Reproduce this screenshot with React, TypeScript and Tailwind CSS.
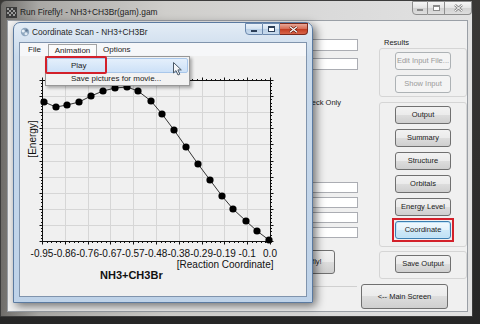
import React from 'react'

const labels = ['-0.95', '-0.86', '-0.76', '-0.67', '-0.57', '-0.48', '-0.38', '-0.29', '-0.19', '-0.1', '0.0']

const points: [number, number][] = [
  [44, 102], [56, 107], [67, 105], [79, 102], [91, 96], [103, 91], [115, 88], [127, 87], [138, 91], [151, 101],
  [162, 114], [174, 130], [186, 147], [198, 164], [210, 180], [222, 196], [233, 209], [246, 221], [257, 231], [269, 240],
]

function Chart() {
  const L = 42
  const R = 270
  const T = 80
  const B = 241
  const dx = (R - L) / 10
  const dy = (B - T) / 10
  const px = (v: number) => Math.round(v) + 0.5
  const steps = Array.from({ length: 51 }, (_, k) => k)

  return (
    <svg width={286} height={240} viewBox="20 56 286 240" className="block">
      {/* grid */}
      {Array.from({ length: 9 }, (_, i) => (
        <line key={'gv' + i} x1={px(L + dx * (i + 1))} x2={px(L + dx * (i + 1))} y1={T} y2={B} stroke="#d6d6d6" />
      ))}
      {Array.from({ length: 9 }, (_, i) => (
        <line key={'gh' + i} x1={L} x2={R} y1={px(T + dy * (i + 1))} y2={px(T + dy * (i + 1))} stroke="#d6d6d6" />
      ))}

      {/* ticks */}
      <g stroke="#111" strokeWidth={1}>
        {steps.map((k) => {
          const len = k % 5 === 0 ? 3 : 1.5
          const x = px(L + (dx * k) / 5)
          const y = px(T + (dy * k) / 5)
          return (
            <g key={'t' + k}>
              <line x1={x} x2={x} y1={B + 0.5} y2={B + 0.5 + len} />
              <line x1={x} x2={x} y1={T + 0.5} y2={T + 0.5 - len} />
              <line x1={L + 0.5} x2={L + 0.5 - len} y1={y} y2={y} />
              <line x1={R + 0.5} x2={R + 0.5 + len} y1={y} y2={y} />
            </g>
          )
        })}
      </g>
      <rect x={L + 0.5} y={T + 0.5} width={R - L} height={B - T} fill="none" stroke="#111" />

      {/* data */}
      <polyline points={points.map((p) => p.join(',')).join(' ')} fill="none" stroke="#333" strokeWidth={1} />
      {points.map(([x, y], i) => (
        <circle key={'p' + i} cx={x} cy={y} r={3.6} fill="#000" />
      ))}

      {/* labels */}
      <g fontFamily="'Liberation Sans', Arial, sans-serif" fill="#111">
        {labels.map((t, i) => (
          <text key={'l' + i} x={L + dx * i} y={256.5} fontSize={10} textAnchor="middle">
            {t}
          </text>
        ))}
        <text x={273.5} y={268} fontSize={10} textAnchor="end">
          [Reaction Coordinate]
        </text>
        <text x={100} y={278.5} fontSize={11} fontWeight="bold">
          NH3+CH3Br
        </text>
        <text transform="rotate(-90)" x={-139} y={35.5} fontSize={10} textAnchor="middle">
          [Energy]
        </text>
      </g>
    </svg>
  )
}

function WinButton({ label, variant = 'normal', className = '' }: { label: string; variant?: 'normal' | 'disabled' | 'default'; className?: string }) {
  const styles = {
    normal: 'border-[#707070] bg-[linear-gradient(#f2f2f2_0%,#ebebeb_49%,#dddddd_50%,#cfcfcf_100%)] text-[#1b1b1b]',
    disabled: 'border-[#adb2b5] bg-[#f4f4f4] text-[#9a9a9a]',
    default: 'border-[#3c7fb1] bg-[linear-gradient(#f1f9fe_0%,#e3f2fb_49%,#cfe9f8_50%,#bfe1f5_100%)] text-[#1b1b1b] shadow-[inset_0_0_0_1px_#c5e4f8]',
  }[variant]
  return (
    <div className={`flex items-center justify-center rounded-[3px] border text-[7.5px] leading-none ${styles} ${className}`}>
      {label}
    </div>
  )
}

function MainWindow() {
  return (
    <div className="flex h-[317px] w-[473px] flex-col rounded-t-[6px] border border-[#3c3c3c] bg-[linear-gradient(90deg,#6e6c69_0%,#a9a8a5_8%,#cfcecb_35%,#dadada_70%,#e2e2e2_100%)]">
      {/* title bar */}
      <div className="flex h-[19px] items-start pl-[5px]">
        <svg width="11" height="11" viewBox="0 0 11 11" className="mt-[6px]">
          <rect width="11" height="11" fill="#3b3b3b" />
          <path d="M1 1h2v2H1zM5 1h2v2H5zM3 3h2v2H3zM7 3h2v2H7zM1 5h2v2H1zM5 5h2v2H5zM9 5h1v2H9zM3 7h2v2H3zM7 7h2v2H7z" fill="#9a9a9a" />
        </svg>
        <span className="ml-[3px] mt-[6px] text-[8.4px] leading-[10px] text-[#222]">Run Firefly! - NH3+CH3Br(gam).gam</span>
        <div className="ml-auto flex h-[14px]">
          <div className="flex w-[16px] items-center justify-center rounded-bl-[4px] border border-[#8e8e8e] bg-[linear-gradient(#f6f6f6,#e4e4e4_50%,#d2d2d2_51%,#dedede)]">
            <div className="mt-[3px] h-[2px] w-[6px] border border-[#8a8a8a] bg-white" />
          </div>
          <div className="flex w-[17px] items-center justify-center border-y border-r border-[#8e8e8e] bg-[linear-gradient(#f6f6f6,#e4e4e4_50%,#d2d2d2_51%,#dedede)]">
            <div className="h-[6px] w-[7px] border border-[#8a8a8a] border-t-2 bg-white" />
          </div>
          <div className="flex w-[27px] items-center justify-center rounded-br-[4px] border-y border-r border-[#8e8e8e] bg-[linear-gradient(#f6f6f6,#e4e4e4_50%,#d2d2d2_51%,#dedede)]">
            <svg width="9" height="8" viewBox="0 0 9 8">
              <path d="M1 1l7 6M8 1L1 7" stroke="#8a8a8a" strokeWidth="2.6" />
              <path d="M1 1l7 6M8 1L1 7" stroke="#fff" strokeWidth="1" />
            </svg>
          </div>
        </div>
      </div>

      {/* client */}
      <div className="flex flex-1 flex-col pl-[6px] pr-[4px] pb-[4px]">
        <div className="flex flex-1 flex-col border border-[#9a9fa6] bg-[#f0f0f0] text-[7.5px] leading-none text-[#1b1b1b]">
          <div className="flex">
            {/* left pane */}
            <div className="flex flex-1 flex-col items-end pr-[21px]">
              <div className="mt-[18px] h-[12px] w-[100px] border border-[#abadb3] bg-white" />
              <div className="mt-[7px] h-[12px] w-[100px] border border-[#abadb3] bg-white" />
              <div className="mr-[17px] mt-[28px] flex h-[10px] items-center gap-[3px]">
                <span className="h-[9px] w-[9px] border border-[#8f8f8f] bg-white" />
                <span>Check Only</span>
              </div>
              <div className="mt-[74px] flex flex-col gap-[4px]">
                <div className="h-[11px] w-[100px] border border-[#abadb3] bg-white" />
                <div className="h-[11px] w-[100px] border border-[#abadb3] bg-white" />
                <div className="h-[11px] w-[100px] border border-[#abadb3] bg-white" />
                <div className="h-[11px] w-[100px] border border-[#abadb3] bg-white" />
              </div>
              <WinButton label="Run Firefly!" className="mr-[23px] mt-[12px] h-[24px] w-[65px]" />
            </div>

            {/* right pane */}
            <div className="flex w-[88px] flex-col">
              <div className="ml-[5px] mt-[18px] h-[9px]">Results</div>
              <div className="flex h-[49px] flex-col items-center gap-[5px] rounded-[3px] border border-[#d5d5d5] pt-[3px]">
                <WinButton label="Edit Input File..." variant="disabled" className="h-[18px] w-[56px]" />
                <WinButton label="Show Input" variant="disabled" className="h-[18px] w-[56px]" />
              </div>
              <div className="mt-[5px] flex h-[145px] flex-col items-center gap-[5px] rounded-[3px] border border-[#d5d5d5] pt-[3px]">
                <WinButton label="Output" className="h-[18px] w-[56px]" />
                <WinButton label="Summary" className="h-[18px] w-[56px]" />
                <WinButton label="Structure" className="h-[18px] w-[56px]" />
                <WinButton label="Orbitals" className="h-[18px] w-[56px]" />
                <WinButton label="Energy Level" className="h-[18px] w-[56px]" />
                <div className="-my-[3px] border-2 border-[#d3202a] p-[1px]">
                  <WinButton label="Coordinate" variant="default" className="h-[18px] w-[56px]" />
                </div>
              </div>
              <div className="mt-[4px] flex h-[28px] flex-col items-center rounded-[3px] border border-[#d5d5d5] pt-[3px]">
                <WinButton label="Save Output" className="h-[18px] w-[56px]" />
              </div>
            </div>
          </div>

          {/* bottom row */}
          <div className="mt-[5px] flex items-start justify-end pr-[19px]">
            <div className="mr-[4px] mt-[2px] h-0 w-[60px] border-t border-[#d0d0d0]" />
            <WinButton label="<-- Main Screen" className="h-[25px] w-[87px]" />
          </div>
        </div>
      </div>
    </div>
  )
}

function CoordinateDialog() {
  return (
    <div className="absolute left-[13px] top-[22px] flex h-[281px] w-[300px] flex-col rounded-t-[7px] border border-[#5b7aa0] bg-[linear-gradient(180deg,#e3ecf5_0%,#c9daec_12%,#bed2e8_100%)] shadow-[3px_3px_10px_rgba(0,0,0,0.55)]">
      {/* title bar */}
      <div className="flex h-[19px] items-start pl-[6px]">
        <svg width="10" height="10" viewBox="0 0 10 10" className="mt-[4px]">
          <circle cx="5" cy="5" r="4.2" fill="#8fa7bf" />
          <circle cx="3.2" cy="4" r="1.6" fill="#e8f0f7" />
          <circle cx="6.6" cy="3.4" r="1.2" fill="#5d7690" />
          <circle cx="6" cy="6.8" r="1.5" fill="#dfe9f2" />
        </svg>
        <span className="ml-[2px] mt-[4px] text-[8.3px] leading-[10px] text-[#1e1e1e]">Coordinate Scan - NH3+CH3Br</span>
        <div className="ml-auto mr-[4px] flex h-[12px]">
          <div className="flex w-[18px] items-center justify-center rounded-bl-[4px] border border-[#6b88ad] bg-[linear-gradient(#e9f1f9,#d3e2f1_50%,#b9cfe6_51%,#c9dbee)]">
            <div className="mt-[3px] h-[2px] w-[6px] border border-[#2c3e57] bg-white" />
          </div>
          <div className="flex w-[17px] items-center justify-center border-y border-r border-[#6b88ad] bg-[linear-gradient(#e9f1f9,#d3e2f1_50%,#b9cfe6_51%,#c9dbee)]">
            <div className="h-[6px] w-[7px] border border-[#2c3e57] border-t-2 bg-white" />
          </div>
          <div className="flex w-[28px] items-center justify-center rounded-br-[4px] border-y border-r border-[#7a2a1e] bg-[linear-gradient(#e9a796,#d7705a_45%,#c43f24_55%,#d8654b)]">
            <svg width="9" height="7" viewBox="0 0 9 7">
              <path d="M1 0.8l7 5.4M8 0.8L1 6.2" stroke="#5b1a10" strokeWidth="2.6" />
              <path d="M1 0.8l7 5.4M8 0.8L1 6.2" stroke="#fff" strokeWidth="1.2" />
            </svg>
          </div>
        </div>
      </div>

      {/* client */}
      <div className="mx-[5px] mb-[5px] flex flex-1 flex-col border border-[#8094ad] bg-[#f0f0f0]">
        <div className="flex h-[13px] items-center bg-[#f6f7f9] pl-[2px] text-[8px] leading-none text-[#1b1b1b]">
          <span className="w-[26px] pl-[6px]">File</span>
          <span className="flex h-[12px] w-[49px] items-center justify-center self-end border border-b-0 border-[#a3a3a3] bg-[#fbfbfb]">Animation</span>
          <span className="pl-[6px]">Options</span>
        </div>
        <Chart />
      </div>
    </div>
  )
}

export default function App() {
  return (
    <div className="relative h-[324px] w-[480px] overflow-hidden bg-[linear-gradient(180deg,#3a3836_0%,#262626_100%)] font-['Liberation_Sans',Arial,sans-serif]">
      <MainWindow />
      <CoordinateDialog />

      {/* dropdown menu */}
      <div className="absolute left-[45px] top-[56px] h-[30px] w-[145px] border border-[#979797] bg-[#f2f2f2] text-[8px] leading-none text-[#1b1b1b] shadow-[2px_2px_3px_rgba(0,0,0,0.3)]">
        <div className="mx-[1px] mt-[1px] flex h-[15px] items-center rounded-[2px] border border-[#a9c7ea] bg-[linear-gradient(#e4effb,#cde1f7)] pl-[23px]">
          Play
        </div>
        <div className="flex h-[12px] items-center pl-[25px]">Save pictures for movie...</div>
        <div className="absolute -left-[1px] -top-[1px] h-[18px] w-[62px] rounded-[2px] border-2 border-[#d3202a]" />
      </div>

      {/* cursor */}
      <svg width="10" height="14" viewBox="0 0 10 14" className="absolute left-[173px] top-[62px]">
        <path d="M0.5 0.5V11L3 8.6L5 13L6.8 12.2L4.9 7.9H8.3Z" fill="#f4f6f8" stroke="#4a5866" strokeWidth="1" strokeLinejoin="round" />
      </svg>
    </div>
  )
}
